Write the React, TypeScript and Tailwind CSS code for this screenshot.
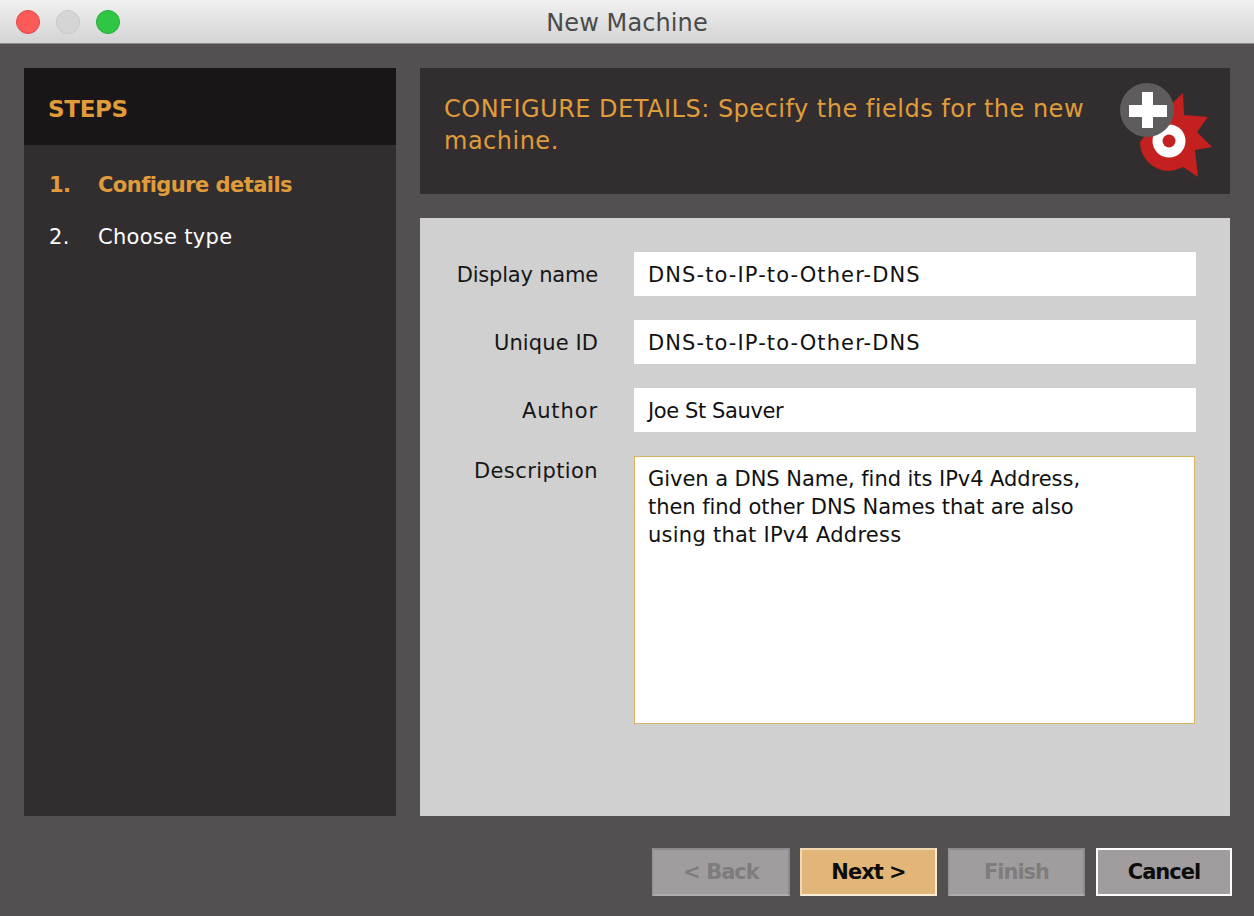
import React from 'react';

const font = "font-['DejaVu_Sans',sans-serif]";

const Logo = () => (
  <svg width="96" height="100" viewBox="0 0 96 100" className="absolute left-[698px] top-[14px]">
    <path
      fill="#c4201f"
      d="M22 60 A29 29 0 0 0 51 89 Q59 88 65 85 L80 95 L77 68 L94 65 L79 50 L90 35 L66 33 L65 11 L45 30 Z"
    />
    <circle cx="51" cy="59" r="16.5" fill="#fff" />
    <circle cx="51" cy="59" r="6.5" fill="#c4201f" />
    <circle cx="29" cy="28" r="27" fill="#5f5c5d" />
    <path fill="#fff" d="M24 10 H35 V23 H49 V35 H35 V46 H24 V35 H11 V23 H24 Z" />
  </svg>
);

const Field = ({ label, value, labelCls, valueCls }: { label: string; value: string; labelCls: string; valueCls: string }) => (
  <div className="flex items-center">
    <div className={`w-[178px] pt-[4px] text-right text-[21px] text-[#161616] ${labelCls}`}>{label}</div>
    <div className={`ml-[36px] flex h-[44px] w-[562px] items-center bg-white pl-[14px] pt-[4px] text-[21px] text-[#111] ${valueCls}`}>
      {value}
    </div>
  </div>
);

const Button = ({ label, kind, className }: { label: string; kind: 'off' | 'next' | 'cancel'; className: string }) => {
  const cls =
    kind === 'next'
      ? 'bg-[#e2b578] text-[#0c0c0c] border-t-[#f0d9b0] border-l-[#f0d9b0] border-r-[#fbeed6] border-b-[#fbeed6]'
      : kind === 'cancel'
        ? 'bg-[#a19d9e] text-[#0c0c0c] border-white'
        : 'bg-[#a19d9e] text-[#7f7c7d] border-t-[#8e8a8b] border-l-[#9a9697] border-r-[#8e8a8b] border-b-[#b0acad]';
  return (
    <div
      className={`flex h-[48px] items-center justify-center border-2 pt-[1px] text-[21px] font-bold tracking-[-1px] ${cls} ${className}`}
    >
      {label}
    </div>
  );
};

export default function App() {
  return (
    <div className={`flex h-[916px] w-[1254px] flex-col overflow-hidden bg-[#545051] ${font}`}>
      {/* Title bar */}
      <div className="relative flex h-[44px] items-center justify-center border-b border-[#8d8b8b] bg-gradient-to-b from-[#f0f0f0] to-[#d4d4d4] pt-[2px]">
        <div className="absolute left-[16px] top-[10px] flex gap-[16px]">
          <div className="h-[24px] w-[24px] rounded-full border border-[#e5484a] bg-[#fc5b57]" />
          <div className="h-[24px] w-[24px] rounded-full border border-[#c8c8c8] bg-[#d5d5d5]" />
          <div className="h-[24px] w-[24px] rounded-full border border-[#27ae3b] bg-[#2ec642]" />
        </div>
        <span className="text-[24px] tracking-[0.1px] text-[#4a4a4a]">New Machine</span>
      </div>

      <div className="flex gap-[24px] pl-[24px] pt-[24px]">
        {/* Sidebar */}
        <div className="flex h-[748px] w-[372px] flex-col bg-[#322e2f]">
          <div className="flex h-[77px] items-center bg-[#191617] pl-[24px] pt-[6px] text-[23px] font-bold tracking-[-0.3px] text-[#e09c3b]">
            STEPS
          </div>
          <div className="flex items-center pl-[25px] pt-[25px] text-[21px] font-bold tracking-[-0.55px] text-[#e09c3b]">
            <span className="w-[49px]">1.</span>
            <span>Configure details</span>
          </div>
          <div className="flex items-center pl-[25px] pt-[20px] text-[21px] tracking-[0.3px] text-white">
            <span className="w-[49px]">2.</span>
            <span>Choose type</span>
          </div>
        </div>

        {/* Main column */}
        <div className="flex w-[810px] flex-col gap-[24px]">
          <div className="relative h-[126px] bg-[#322e2f] pl-[24px] pr-[130px] pt-[25px] text-[24px] leading-[32px] tracking-[0.5px] text-[#e09c3b]">
            CONFIGURE DETAILS: Specify the fields for the new machine.
            <Logo />
          </div>
          <div className="flex h-[598px] flex-col gap-[24px] bg-[#d0d0d0] pt-[34px]">
            <Field label="Display name" value="DNS-to-IP-to-Other-DNS" labelCls="tracking-[-0.2px]" valueCls="tracking-[1.1px]" />
            <Field label="Unique ID" value="DNS-to-IP-to-Other-DNS" labelCls="tracking-[0.1px]" valueCls="tracking-[1.1px]" />
            <Field label="Author" value="Joe St Sauver" labelCls="tracking-[0.9px]" valueCls="tracking-[-0.4px]" />
            <div className="flex items-start">
              <div className="w-[178px] text-right text-[21px] tracking-[0.4px] text-[#161616]">Description</div>
              <div className="ml-[36px] h-[268px] w-[561px] border border-[#d9b45f] bg-white pl-[13px] pt-[8px] text-[21px] leading-[28px] tracking-[-0.05px] text-[#111]">
                Given a DNS Name, find its IPv4 Address,
                <br />
                then find other DNS Names that are also
                <br />
                <span className="tracking-[0.25px]">using that IPv4 Address</span>
              </div>
            </div>
          </div>
        </div>
      </div>

      {/* Footer buttons */}
      <div className="flex justify-end gap-[11px] pr-[22px] pt-[32px]">
        <Button label="< Back" kind="off" className="mr-[-1px] w-[138px]" />
        <Button label="Next >" kind="next" className="w-[137px]" />
        <Button label="Finish" kind="off" className="w-[137px]" />
        <Button label="Cancel" kind="cancel" className="w-[136px]" />
      </div>
    </div>
  );
}
